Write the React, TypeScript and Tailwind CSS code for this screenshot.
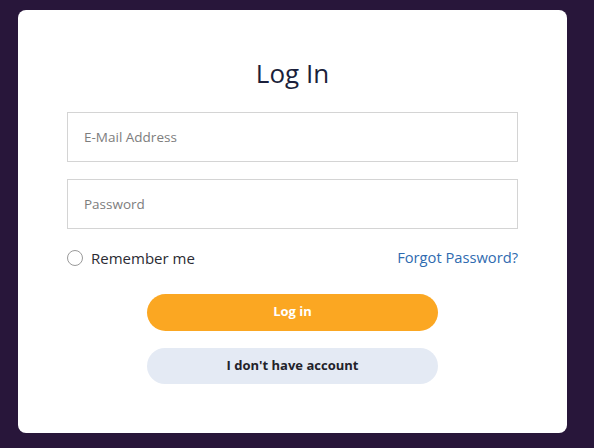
export default function App() {
  return (
    <div className="h-screen w-full bg-[#28163a] pt-[10px] px-[18px]" style={{ fontFamily: '"Open Sans", "Liberation Sans", sans-serif' }}>
      <div className="h-[423px] w-[549px] rounded-lg bg-white px-[49px] pt-[46px]">
        <h1 className="text-center text-[26px] leading-[34px] text-[#1b1f3b]">Log In</h1>

        <div className="mt-[22px] flex flex-col gap-[17px]">
          <input
            placeholder="E-Mail Address"
            className="h-[50px] w-full border border-[#d4d4d4] px-4 text-[13.5px] text-[#555] placeholder:text-[#7d7d7d] outline-none"
          />
          <input
            type="password"
            placeholder="Password"
            className="h-[50px] w-full border border-[#d4d4d4] px-4 text-[13.5px] text-[#555] placeholder:text-[#7d7d7d] outline-none"
          />
        </div>

        <div className="mt-[18px] flex items-center justify-between">
          <label className="flex items-center gap-2 text-[15px] text-[#2b2b33]">
            <span className="h-4 w-4 rounded-full border border-[#9a9a9a]" />
            Remember me
          </label>
          <a className="text-[14.7px] text-[#2f6bb0] -mt-[3px]">Forgot Password?</a>
        </div>

        <div className="mt-[24px] flex flex-col items-center gap-[17px]">
          <button className="h-[37px] w-[291px] rounded-full bg-[#fba722] text-[13px] font-bold text-white">Log in</button>
          <button className="h-[36px] w-[291px] rounded-full bg-[#e4eaf4] text-[13px] font-bold text-[#22222a]">I don't have account</button>
        </div>
      </div>
    </div>
  );
}
